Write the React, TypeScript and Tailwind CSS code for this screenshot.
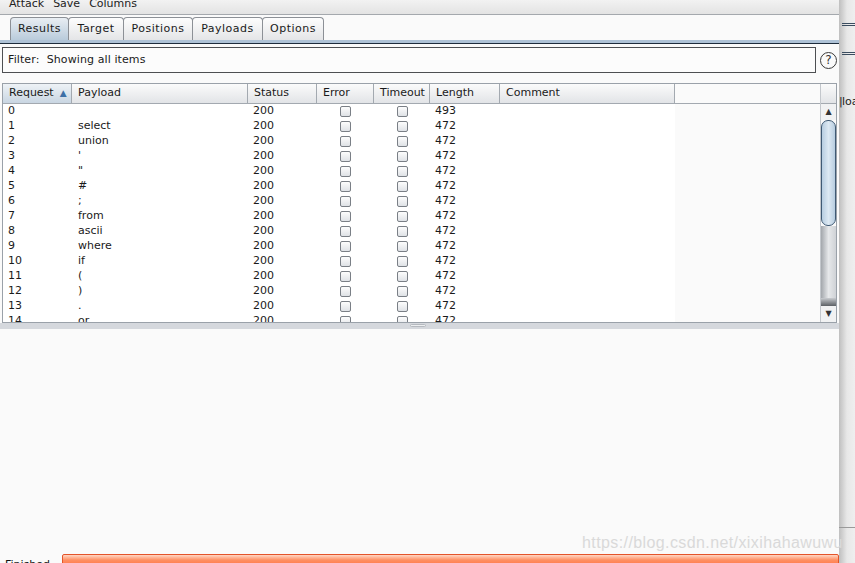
const rows: [string, string, string, string][] = [
  ["0", "", "200", "493"],
  ["1", "select", "200", "472"],
  ["2", "union", "200", "472"],
  ["3", "'", "200", "472"],
  ["4", '"', "200", "472"],
  ["5", "#", "200", "472"],
  ["6", ";", "200", "472"],
  ["7", "from", "200", "472"],
  ["8", "ascii", "200", "472"],
  ["9", "where", "200", "472"],
  ["10", "if", "200", "472"],
  ["11", "(", "200", "472"],
  ["12", ")", "200", "472"],
  ["13", ".", "200", "472"],
  ["14", "or", "200", "472"],
];

const tabs = [
  { t: "Results", w: "w-[59px]" },
  { t: "Target", w: "w-[56px]" },
  { t: "Positions", w: "w-[70px]" },
  { t: "Payloads", w: "w-[71px]" },
  { t: "Options", w: "w-[62px]" },
];

function Check() {
  return (
    <div className="h-[11px] w-[11px] rounded-[2px] border border-[#7a7f86] bg-gradient-to-b from-[#fdfdfd] to-[#dfe2e6]" />
  );
}

function HeaderCell({ label, w, sorted }: { label: string; w: string; sorted?: boolean }) {
  return (
    <div
      className={`flex h-full items-center border-r border-[#a3a9b0] pl-[6px] ${w} ${
        sorted
          ? "bg-gradient-to-b from-[#eef2f6] to-[#c9d6e2]"
          : "bg-gradient-to-b from-[#fbfbfb] to-[#e2e4e7]"
      }`}
    >
      <span>{label}</span>
      {sorted && <span className="ml-[6px] text-[9px] text-[#3d6fa6]">▲</span>}
    </div>
  );
}

export default function App() {
  return (
    <div className="relative flex h-[563px] w-[855px] overflow-hidden bg-[#fafafa] font-['DejaVu_Sans',sans-serif] text-[11px] text-[#1a1a1a]">
      {/* main window */}
      <div className="flex w-[839px] shrink-0 flex-col">
        {/* menu bar */}
        <div className="h-[15px] shrink-0 overflow-hidden border-b border-[#a4a8ad] bg-gradient-to-b from-[#f2f2f2] to-[#e3e3e3]">
          <div className="-mt-[5px] flex gap-[9px] pl-[9px] leading-[18px] text-[#222]">
            <span>Attack</span>
            <span>Save</span>
            <span>Columns</span>
          </div>
        </div>

        {/* tabs */}
        <div className="flex h-[25px] shrink-0 items-end bg-[#fafafa] pl-[10px]">
          {tabs.map(({ t, w }, i) => (
            <div
              key={t}
              className={`-mr-px flex h-[23px] items-center justify-center rounded-t-[4px] border border-b-0 border-[#8c9096] pt-[1px] tracking-[0.5px] ${w} ${
                i === 0
                  ? "bg-gradient-to-b from-[#e9eef3] to-[#b9cbdb]"
                  : "bg-gradient-to-b from-[#fdfdfd] to-[#e4e5e7]"
              }`}
            >
              {t}
            </div>
          ))}
        </div>
        <div className="h-[3px] shrink-0 bg-[#aec2d6]" />
        <div className="h-px shrink-0 bg-[#1d2c3c]" />

        {/* filter */}
        <div className="mt-[3px] flex h-[26px] shrink-0 items-center pl-[2px]">
          <div className="flex h-full w-[814px] items-center border border-[#4d4f52] bg-[#fcfcfc] pl-[5px] tracking-[0.1px]">
            Filter:&nbsp; Showing all items
          </div>
          <div className="ml-[4px] flex h-[17px] w-[17px] items-center justify-center rounded-full border border-[#3a3a3a] text-[12px] leading-none text-[#333]">
            ?
          </div>
        </div>

        {/* table */}
        <div className="mx-[2px] mt-[10px] flex h-[240px] shrink-0 border border-[#9aa1a9]">
          <div className="flex w-[817px] flex-col overflow-hidden">
            <div className="flex h-[20px] shrink-0 border-b border-[#a3a9b0]">
              <div className="flex h-full w-[672px]">
                <HeaderCell label="Request" w="w-[69px]" sorted />
                <HeaderCell label="Payload" w="w-[176px]" />
                <HeaderCell label="Status" w="w-[69px]" />
                <HeaderCell label="Error" w="w-[57px]" />
                <HeaderCell label="Timeout" w="w-[56px]" />
                <HeaderCell label="Length" w="w-[70px]" />
                <HeaderCell label="Comment" w="w-[175px]" />
              </div>
            </div>
            <div className="flex flex-1 overflow-hidden">
              <div className="w-[672px] bg-white">
                {rows.map(([n, p, s, l]) => (
                  <div key={n} className="flex h-[15px] items-center">
                    <div className="w-[69px] pl-[5px]">{n}</div>
                    <div className="w-[176px] pl-[6px]">{p}</div>
                    <div className="w-[69px] pl-[5px]">{s}</div>
                    <div className="flex w-[57px] justify-center">
                      <Check />
                    </div>
                    <div className="flex w-[56px] justify-center">
                      <Check />
                    </div>
                    <div className="w-[70px] pl-[5px]">{l}</div>
                    <div className="w-[175px]" />
                  </div>
                ))}
              </div>
              <div className="flex-1 bg-[#fafafa]" />
            </div>
          </div>
          {/* scrollbar */}
          <div className="flex w-[16px] flex-col border-l border-[#c3c7cc]">
            <div className="h-[20px] shrink-0 border-b border-[#a3a9b0] bg-gradient-to-b from-[#fbfbfb] to-[#e2e4e7]" />
            <div className="flex h-[16px] shrink-0 items-center justify-center bg-[#f1f2f3] text-[8px] text-[#333]">▲</div>
            <div className="h-[106px] shrink-0 rounded-[7px] border border-[#405a74] bg-gradient-to-r from-[#b7cde0] via-[#dde9f3] to-[#b7cde0]" />
            <div className="flex-1 bg-gradient-to-r from-[#a3a7ac] via-[#e6e8ea] to-[#cfd2d6]" />
            <div className="h-[8px] shrink-0 bg-gradient-to-b from-[#c9ccd0] to-[#5d6166]" />
            <div className="flex h-[16px] shrink-0 items-center justify-center bg-[#f1f2f3] text-[8px] text-[#333]">▼</div>
          </div>
        </div>

        {/* splitter */}
        <div className="flex h-[6px] shrink-0 justify-center bg-[#d5d8dd]">
          <div className="ml-[-4px] mt-[1px] h-[3px] w-[16px] rounded-[2px] border border-[#b5b9bf] bg-[#eceef0]" />
        </div>

        <div className="flex-1 bg-[#fafafa]" />

        {/* status */}
        <div className="flex h-[9px] shrink-0 items-start">
          <div className="w-[62px] pl-[5px] leading-[22px] text-[#111]">Finished</div>
          <div className="h-[12px] flex-1 rounded-[2px] border border-[#e4542a] bg-gradient-to-b from-[#ffd6c4] via-[#ff8f63] to-[#ff7a4a]" />
        </div>
      </div>

      {/* window behind */}
      <div className="relative w-[16px] shrink-0 overflow-hidden bg-gradient-to-r from-[#bfbfbf] via-[#e8e8e8] to-[#efefef]">
        <div className="absolute left-[3px] top-[23px] h-[3px] w-[20px] border-y border-[#3b4d60]" />
        <div className="absolute left-[3px] top-[52px] h-[3px] w-[20px] border-y border-[#3b4d60]" />
        <div className="absolute left-0 top-[94px] w-[30px] whitespace-nowrap text-[11px] text-[#222]">
          <span className="inline-block w-[3px] overflow-hidden align-top">|</span>loa
        </div>
        <div className="absolute left-0 top-[527px] h-px w-[20px] bg-[#9a9a9a]" />
      </div>

      {/* watermark */}
      <div className="pointer-events-none absolute left-[582px] top-[531px] whitespace-nowrap font-['Liberation_Sans',sans-serif] text-[16px] tracking-[0.4px] text-[#d9d9d9]">
        https://blog.csdn.net/xixihahawuwu
      </div>
    </div>
  );
}
